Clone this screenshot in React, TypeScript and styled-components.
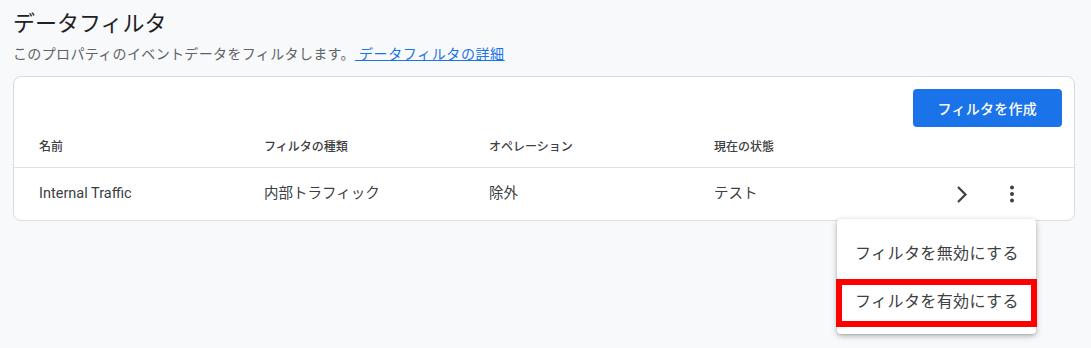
import React from 'react'
import styled, { createGlobalStyle } from 'styled-components'

const GlobalStyle = createGlobalStyle`
  html, body {
    margin: 0;
    background: #f8f9fa;
    font-family: Roboto, "Noto Sans CJK JP", sans-serif;
    color: #202124;
  }
`

const Page = styled.div`
  box-sizing: border-box;
  min-height: 100vh;
  padding: 10px 16px 0 13px;
`

const Title = styled.h1`
  margin: 0;
  font-size: 22px;
  line-height: 28px;
  font-weight: 400;
  color: #202124;
`

const Subtitle = styled.p`
  margin: 6px 0 0;
  font-size: 14px;
  line-height: 20px;
  letter-spacing: 0.35px;
  color: #5f6368;
`

const DocLink = styled.a`
  color: #1a73e8;
  text-decoration: underline;
  letter-spacing: 0.6px;
`

const Card = styled.section`
  margin-top: 12px;
  background: #fff;
  border: 1px solid #dadce0;
  border-radius: 8px;
  padding-top: 12px;
`

const Toolbar = styled.div`
  display: flex;
  justify-content: flex-end;
  padding: 0 12px;
`

const PrimaryButton = styled.button`
  height: 38px;
  padding: 0 25px;
  border: none;
  border-radius: 4px;
  background: #1a73e8;
  color: #fff;
  font-family: inherit;
  font-size: 14px;
  font-weight: 500;
  letter-spacing: 0.25px;
`

const Row = styled.div<{ $header?: boolean }>`
  display: grid;
  grid-template-columns: 225px 225px 225px 225px 1fr;
  align-items: center;
  padding-left: 25px;
  height: ${p => (p.$header ? '40px' : '52px')};
  border-bottom: ${p => (p.$header ? '1px solid #e0e0e0' : 'none')};
`

const Cell = styled.div<{ $header?: boolean }>`
  font-size: ${p => (p.$header ? '12px' : '14.5px')};
  font-weight: ${p => (p.$header ? 500 : 400)};
  color: #3c4043;
  line-height: 20px;
`

const Actions = styled.div`
  display: flex;
  justify-content: flex-end;
  align-items: center;
  gap: 10px;
  padding-right: 42px;
`

const IconButton = styled.button`
  width: 40px;
  height: 40px;
  display: flex;
  align-items: center;
  justify-content: center;
  border: none;
  background: transparent;
  padding: 0;
  color: #3c4043;
`

const KebabWrap = styled.div`
  position: relative;
`

const Menu = styled.div`
  position: absolute;
  top: calc(100% + 5px);
  right: -4px;
  width: 199px;
  padding: 9px 0 10px;
  background: #fff;
  border-radius: 4px;
  box-shadow: 0 2px 6px rgba(0, 0, 0, 0.28), 0 1px 2px rgba(0, 0, 0, 0.12);
  z-index: 2;
`

const MenuItem = styled.div`
  position: relative;
  height: 48px;
  display: flex;
  align-items: center;
  padding-left: 18px;
  font-size: 16px;
  letter-spacing: 0.4px;
  color: #3c4043;
  white-space: nowrap;
`

const Highlight = styled.span`
  position: absolute;
  top: 3px;
  bottom: -3px;
  left: -1px;
  right: -1px;
  border: 6px solid #ff0000;
`

const Chevron = () => (
  <svg width="20" height="20" viewBox="0 0 20 20">
    <polyline points="6,3 13.5,10.5 6,18" fill="none" stroke="currentColor" strokeWidth="2.2" />
  </svg>
)

const MoreVert = () => (
  <svg width="24" height="24" viewBox="0 0 24 24" fill="currentColor">
    <circle cx="12" cy="5.5" r="2" />
    <circle cx="12" cy="12" r="2" />
    <circle cx="12" cy="18.5" r="2" />
  </svg>
)

const headers = ['名前', 'フィルタの種類', 'オペレーション', '現在の状態']
const filter = ['Internal Traffic', '内部トラフィック', '除外', 'テスト']

export default function App() {
  return (
    <>
      <GlobalStyle />
      <Page>
        <Title>データフィルタ</Title>
        <Subtitle>
          このプロパティのイベントデータをフィルタします。<DocLink href="#"> データフィルタの詳細</DocLink>
        </Subtitle>
        <Card>
          <Toolbar>
            <PrimaryButton>フィルタを作成</PrimaryButton>
          </Toolbar>
          <Row $header>
            {headers.map(h => (
              <Cell $header key={h}>{h}</Cell>
            ))}
            <div />
          </Row>
          <Row>
            {filter.map(v => (
              <Cell key={v}>{v}</Cell>
            ))}
            <Actions>
              <IconButton aria-label="詳細"><Chevron /></IconButton>
              <KebabWrap>
                <IconButton aria-label="その他"><MoreVert /></IconButton>
                <Menu>
                  <MenuItem>フィルタを無効にする</MenuItem>
                  <MenuItem>
                    フィルタを有効にする
                    <Highlight />
                  </MenuItem>
                </Menu>
              </KebabWrap>
            </Actions>
          </Row>
        </Card>
      </Page>
    </>
  )
}
